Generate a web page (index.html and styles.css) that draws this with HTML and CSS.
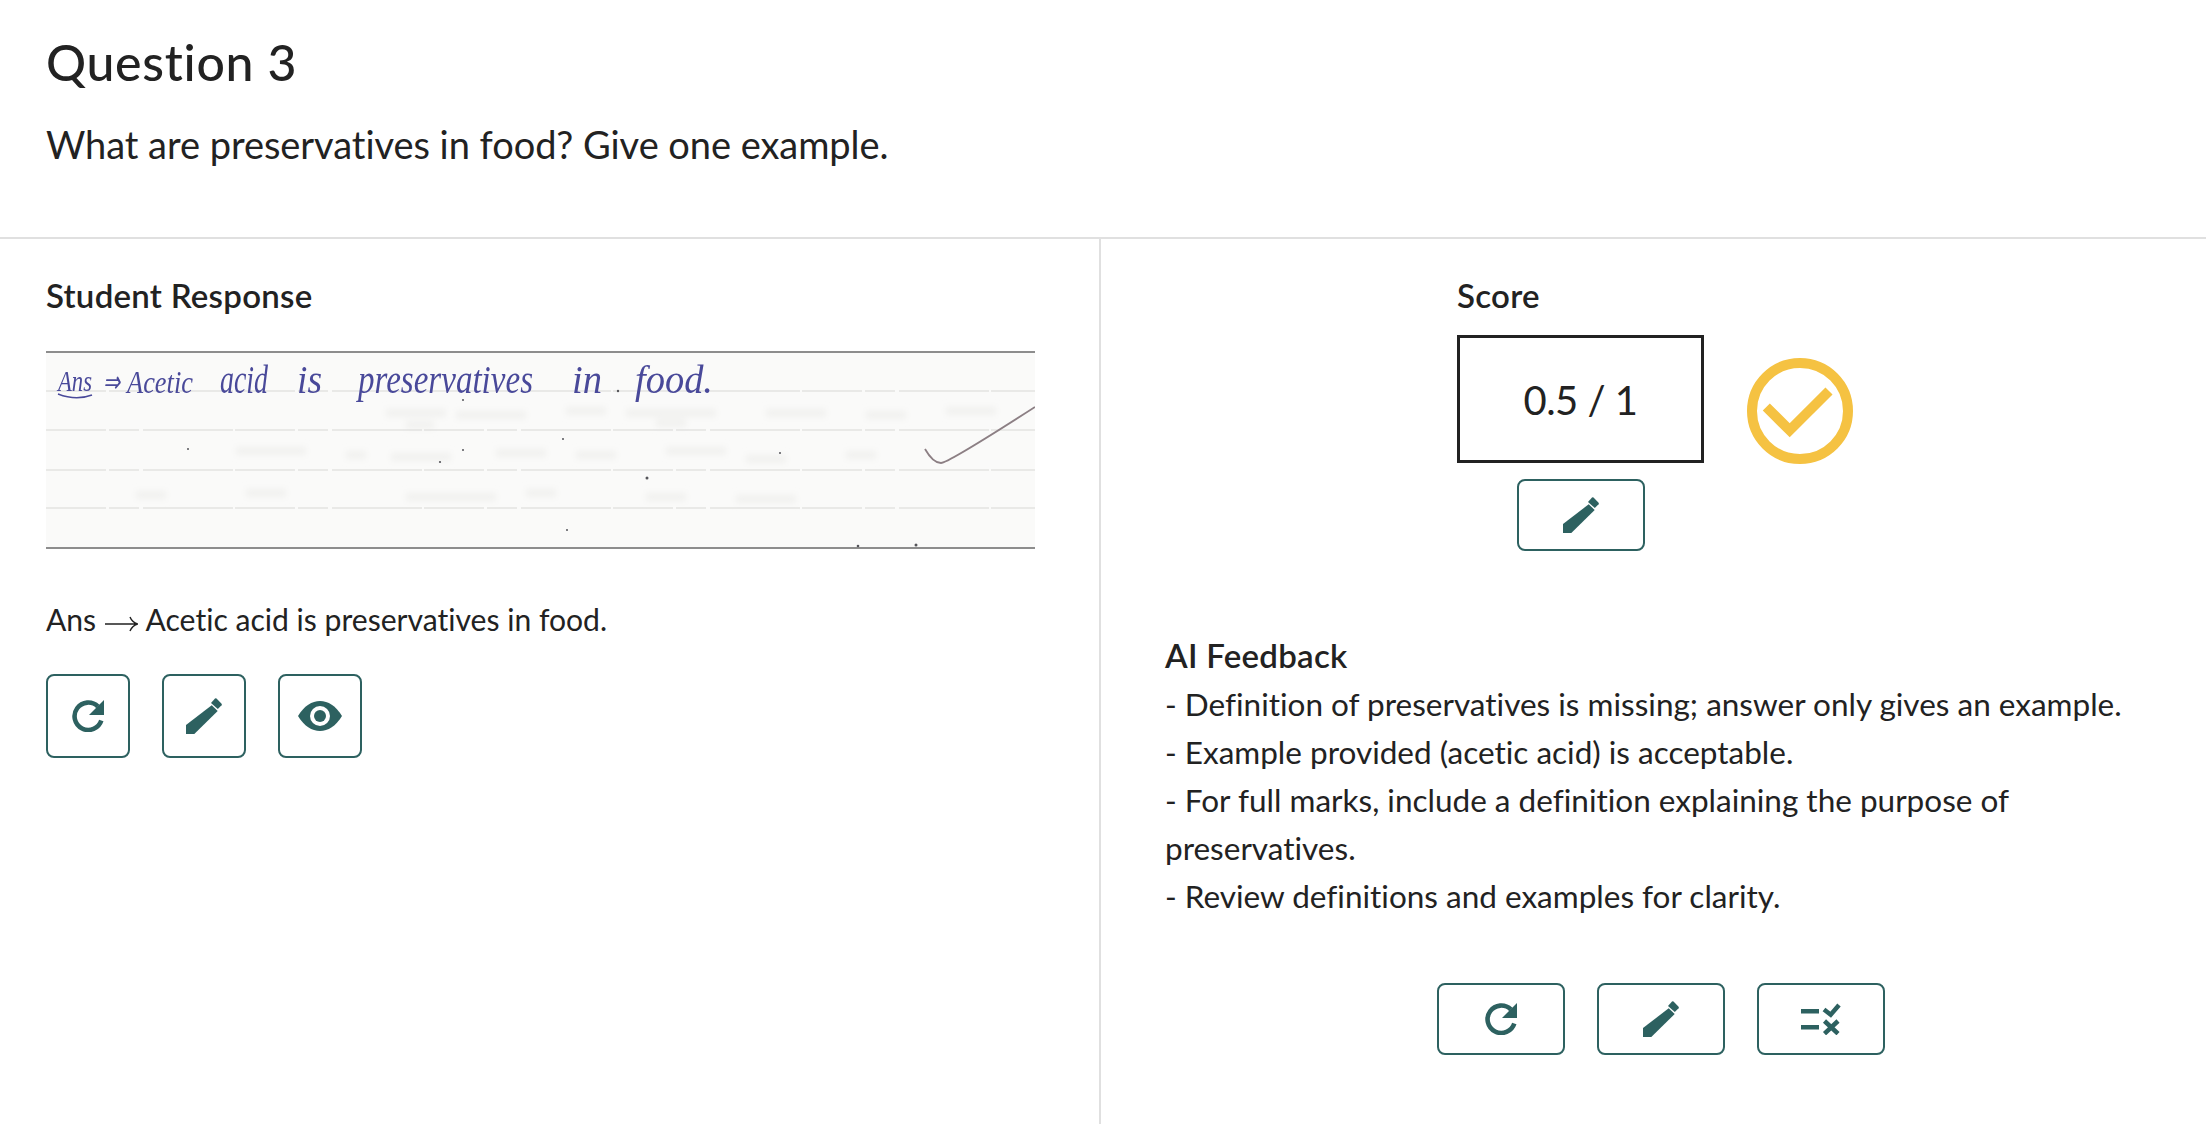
FILE: index.html
```html
<!DOCTYPE html>
<html lang="en">
<head>
<meta charset="utf-8">
<title>Question 3</title>
<link rel="stylesheet" href="styles.css">
</head>
<body>
<svg class="defs" width="0" height="0" aria-hidden="true">
  <defs>
    <symbol id="i-redo" viewBox="0 0 32 32">
      <path d="M25.9 6.5A13.7 13.7 0 1 0 29.3 20.5" fill="none" stroke="currentColor" stroke-width="4.6"/>
      <path d="M32 0V15H17Z" fill="currentColor"/>
    </symbol>
    <symbol id="i-pen" viewBox="0 0 36 36">
      <path d="M0 27L25.7 7.3L31.7 13L8.3 36H0Z" fill="currentColor"/>
      <path d="M25 5L29 0.5Q29.8 0 30.5 0.6L35.6 5.7Q36.2 6.5 35.6 7.2L31.8 11Z" fill="currentColor"/>
    </symbol>
    <symbol id="i-eye" viewBox="0 0 44 30">
      <path d="M0 15C6 5 14 0 22 0C30 0 38 5 44 15C38 25 30 30 22 30C14 30 6 25 0 15Z" fill="currentColor"/>
      <circle cx="22" cy="15" r="10" fill="#fff"/>
      <circle cx="22" cy="15" r="6" fill="currentColor"/>
    </symbol>
    <symbol id="i-list" viewBox="0 0 40 32">
      <path d="M0 6H18V10.4H0ZM0 22H18V26.4H0Z" fill="currentColor"/>
      <path d="M23 6.5L29.7 11.7L38 2M23.5 18L37 30.7M37 18L23.5 30.7" fill="none" stroke="currentColor" stroke-width="4.5"/>
    </symbol>
  </defs>
</svg>
<main class="page">
  <header class="question">
    <h1 class="question-title">Question 3</h1>
    <p class="question-text">What are preservatives in food? Give one example.</p>
  </header>
  <div class="columns">
    <section class="student">
      <h2 class="label">Student Response</h2>
      <svg class="scan" viewBox="0 0 989 198" width="989" height="198" role="img" aria-label="Scanned handwritten answer">
        <defs>
          <filter id="soft"><feGaussianBlur stdDeviation="0.5"/></filter>
          <filter id="ghost" x="-20%" y="-100%" width="140%" height="300%"><feGaussianBlur stdDeviation="3"/></filter>
        </defs>
        <rect width="989" height="198" fill="#fafaf9"/>
        <g class="ghost" filter="url(#ghost)">
          <path d="M340 62h60M360 74h28M410 64h70M520 60h40M580 62h90M610 72h30M720 62h60M820 64h40M900 60h50"/>
          <path d="M190 100h70M300 104h20M345 106h60M450 102h50M530 104h40M620 100h60M700 108h40M800 104h30"/>
          <path d="M90 144h30M200 142h40M360 146h90M480 142h30M600 146h40M690 148h60"/>
        </g>
        <g class="rules">
          <path d="M0 40H989M0 79H989M0 119H989M0 157H989"/>
        </g>
        <path d="M0 1H989M0 197H989" fill="none" stroke="#6a6a6a" stroke-width="1.6"/>
        <g class="specks">
          <circle cx="601" cy="127" r="1.5"/><circle cx="734" cy="102" r="1"/><circle cx="812" cy="195" r="1.3"/>
          <circle cx="870" cy="194" r="1.5"/><circle cx="517" cy="88" r="1"/><circle cx="521" cy="179" r="1"/>
          <circle cx="572" cy="40" r="1.2"/><circle cx="142" cy="98" r="1"/><circle cx="394" cy="111" r="1.1"/>
          <circle cx="417" cy="99" r="1"/><circle cx="417" cy="49" r="1"/>
        </g>
        <g class="hand" filter="url(#soft)">
          <text x="12" y="40" textLength="34" lengthAdjust="spacingAndGlyphs">Ans</text>
          <path class="hand-line" d="M12 43Q30 50 46 44"/>
          <text x="57" y="41" textLength="17" lengthAdjust="spacingAndGlyphs">⇒</text>
          <text class="mid" x="81" y="42" textLength="66" lengthAdjust="spacingAndGlyphs">Acetic</text>
          <text class="big" x="174" y="42" textLength="48" lengthAdjust="spacingAndGlyphs">acid</text>
          <text class="big" x="251" y="42" textLength="25" lengthAdjust="spacingAndGlyphs">is</text>
          <text class="big" x="312" y="42" textLength="175" lengthAdjust="spacingAndGlyphs">preservatives</text>
          <text class="big" x="526" y="42" textLength="30" lengthAdjust="spacingAndGlyphs">in</text>
          <text class="big" x="589" y="42" textLength="78" lengthAdjust="spacingAndGlyphs">food.</text>
        </g>
        <path d="M879 98Q887 112 895 112Q902 112 989 56" fill="none" stroke="#8c7f84" stroke-width="1.8"/>
      </svg>
      <p class="transcript">Ans <svg class="arrow" viewBox="0 0 33 20" width="33" height="20" aria-hidden="true"><path d="M0 10H32M25 3Q27 8 32.5 10Q27 12 25 17" fill="none" stroke="#222" stroke-width="1.4"/></svg> Acetic acid is preservatives in food.</p>
      <div class="actions">
        <button class="btn square" aria-label="Regenerate"><svg class="icon redo"><use href="#i-redo"/></svg></button>
        <button class="btn square" aria-label="Edit"><svg class="icon pen"><use href="#i-pen"/></svg></button>
        <button class="btn square" aria-label="View"><svg class="icon eye"><use href="#i-eye"/></svg></button>
      </div>
    </section>
    <section class="grading">
      <div class="score">
        <h2 class="label">Score</h2>
        <div class="score-row">
          <div class="score-main">
            <div class="score-box">0.5 / 1</div>
            <button class="btn wide" aria-label="Edit score"><svg class="icon pen"><use href="#i-pen"/></svg></button>
          </div>
          <svg class="status" viewBox="0 0 106 106" width="106" height="106" aria-label="Partially correct" role="img">
            <circle cx="53" cy="53" r="48" fill="none" stroke="#f5c242" stroke-width="10"/>
            <path d="M19.3 49L42.7 72.3L82 33" fill="none" stroke="#f5c242" stroke-width="10"/>
          </svg>
        </div>
      </div>
      <div class="feedback">
        <h2 class="label">AI Feedback</h2>
        <p>- Definition of preservatives is missing; answer only gives an example.</p>
        <p>- Example provided (acetic acid) is acceptable.</p>
        <p>- For full marks, include a definition explaining the purpose of preservatives.</p>
        <p>- Review definitions and examples for clarity.</p>
      </div>
      <div class="feedback-actions">
        <button class="btn wide" aria-label="Regenerate feedback"><svg class="icon redo"><use href="#i-redo"/></svg></button>
        <button class="btn wide" aria-label="Edit feedback"><svg class="icon pen"><use href="#i-pen"/></svg></button>
        <button class="btn wide" aria-label="Rubric"><svg class="icon list"><use href="#i-list"/></svg></button>
      </div>
    </section>
  </div>
</main>
</body>
</html>
```
FILE: styles.css
```css
* { box-sizing: border-box; }
html, body { margin: 0; padding: 0; background: #fff; }
body { font-family: Lato, "Open Sans", sans-serif; color: #222; overflow: hidden; font-variant-ligatures: none; }
.defs { position: absolute; }
.page { height: 1124px; display: flex; flex-direction: column; }

.question { height: 239px; padding: 30px 46px 0; border-bottom: 2px solid #e0e0e0; flex: none; }
.question-title { margin: 0; font-size: 50px; line-height: 64px; font-weight: 500; letter-spacing: 0.7px; }
.question-text { margin: 27px 0 0; font-size: 38px; line-height: 47px; letter-spacing: -0.05px; }

.columns { flex: 1; display: grid; grid-template-columns: 1101px 1105px; }
.student { padding: 35px 46px 0; border-right: 2px solid #e0e0e0; }
.label { margin: 0; font-size: 33px; line-height: 42px; font-weight: 600; letter-spacing: 0.27px; }
.scan { display: block; margin-top: 35px; }
.transcript { margin: 48px 0 0; font-size: 30.1px; line-height: 44px; height: 44px; }
.arrow { vertical-align: -3px; margin: 0 1px; }
.actions { display: flex; gap: 32px; margin-top: 33px; }

.btn { display: flex; align-items: center; justify-content: center; padding: 0; background: #fff; border: 2px solid #2d6160; border-radius: 8px; color: #2d6160; }
.btn.square { width: 84px; height: 84px; }
.btn.wide { width: 128px; height: 72px; }
.icon { display: block; }
.icon.redo { width: 32px; height: 32px; }
.icon.pen { width: 36px; height: 36px; }
.icon.eye { width: 44px; height: 30px; }
.icon.list { width: 40px; height: 32px; }

.scan text { font-family: "Liberation Serif", serif; font-style: italic; }
.ghost path { fill: none; stroke: #f1f1ef; stroke-width: 8; }
.rules path { fill: none; stroke: #d8d8d6; stroke-width: 1.1; stroke-dasharray: 60 3 30 4 90 2; }
.specks circle { fill: #55555a; }
.hand text { font-size: 30px; fill: #4a4a9a; }
.hand text.mid { font-size: 32px; }
.hand text.big { font-size: 40px; }
.hand-line { fill: none; stroke: #4a4a9a; stroke-width: 1.5; }

.grading { padding-top: 35px; display: flex; flex-direction: column; }
.score { margin-left: 356px; }
.score-row { display: flex; gap: 43px; margin-top: 19px; }
.score-main { display: flex; flex-direction: column; align-items: center; gap: 16px; }
.score-box { width: 247px; height: 128px; padding-top: 2px; border: 3px solid #222; display: flex; align-items: center; justify-content: center; font-size: 40px; letter-spacing: -0.5px; }
.status { margin-top: 23px; }

.feedback { margin: 81px 0 0 64px; width: 990px; font-size: 31.5px; line-height: 48px; }
.feedback .label { line-height: 46px; margin-bottom: 2px; }
.feedback p { margin: 0; }
.feedback-actions { display: flex; gap: 32px; margin: 63px 0 0 336px; }
```
